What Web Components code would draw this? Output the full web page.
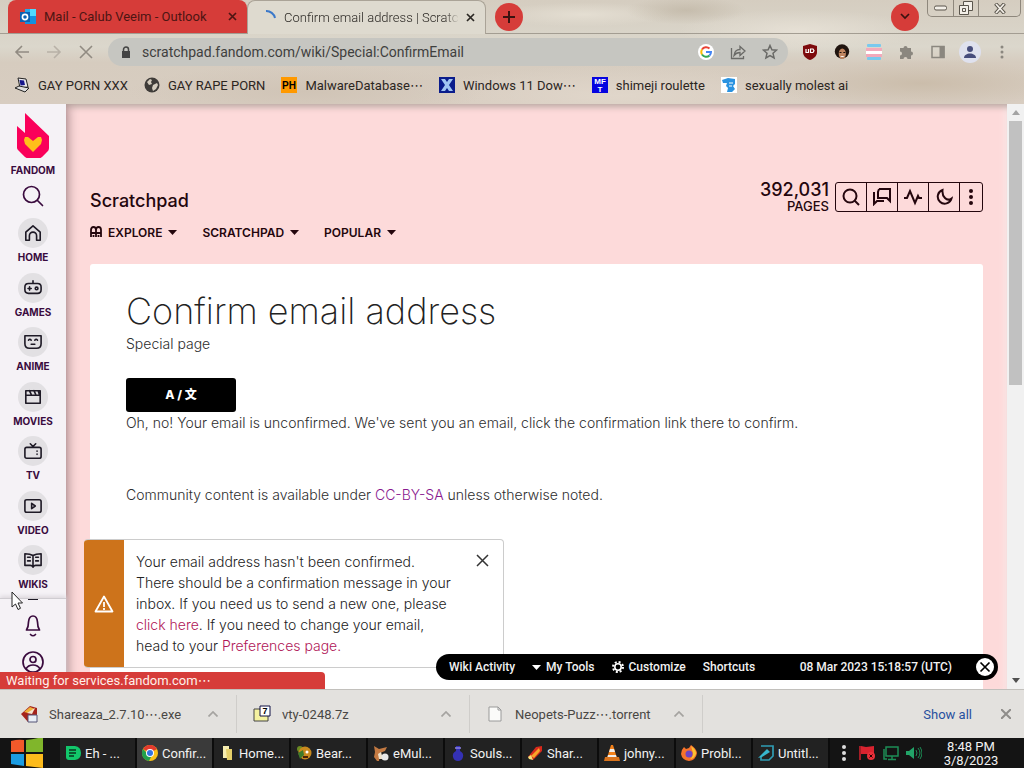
<!DOCTYPE html>
<html lang="en">
<head>
<meta charset="utf-8">
<meta name="viewport" content="width=device-width, initial-scale=1">
<title>Confirm email address | Scratchpad</title>
<style>
  html, body { height: 100%; margin: 0; }
  body {
    overflow: hidden;
    --ui: Roboto, "Liberation Sans", "Noto Sans CJK KR", sans-serif;
    --wiki: Inter, "Open Sans", "Noto Sans CJK SC", sans-serif;
    --red: #d63c39;
    --plum: #3a0b3e;
    font-family: var(--ui);
  }
</style>
</head>
<body>
<desktop-screen></desktop-screen>

<script>
// small helper so every element doesn't have to repeat the template dance
function define(name, html) {
  const template = document.createElement("template");
  template.innerHTML = `<style>
    *, *::before { box-sizing: border-box; }
    button { font: inherit; color: inherit; background: none; border: 0; padding: 0; margin: 0; }
    a { color: inherit; text-decoration: none; }
    svg { display: block; flex: none; }
    .e { font-family: "DejaVu Sans", sans-serif; line-height: 1; }
  </style>` + html;

  customElements.define(name, class extends HTMLElement {
    constructor() {
      super();
      this.attachShadow({ mode: "open" });
      this.shadowRoot.appendChild(template.content.cloneNode(true));
    }
  });
}

/* ---------- browser chrome ---------- */

define("browser-tab", `
<style>
  :host { display: flex; align-items: center; width: 239px; height: 33px; padding: 0 8px 0 12px; border-radius: 8px 8px 0 0; background: var(--red); color: #4d1513; font-size: 13px; box-sizing: border-box; }
  :host([active]) { height: 34px; background: #dedacf; color: #2b2824; font-weight: 300; border: 1px solid #aaa397; border-bottom: 0; }
  ::slotted(svg) { width: 16px; height: 16px; flex: none; margin-right: 8px; }
  .label { flex: 1; min-width: 0; overflow: hidden; white-space: nowrap; }
  :host([active]) .label { -webkit-mask-image: linear-gradient(90deg, #000 92%, transparent); mask-image: linear-gradient(90deg, #000 92%, transparent); }
  button { width: 14px; height: 16px; margin-left: 4px; display: grid; place-items: center; }
</style>
<slot name="icon"></slot>
<span class="label"><slot></slot></span>
<button aria-label="Close tab"><svg width="9" height="9" viewBox="0 0 9 9" stroke="currentColor" stroke-width="1.7"><path d="M1 1l7 7M8 1l-7 7"/></svg></button>
`);

define("tab-strip", `
<style>
  :host { display: flex; align-items: flex-end; height: 34px; padding-left: 8px; border-bottom: 1px solid #a39d92; box-sizing: border-box; }
  .round { width: 28px; height: 28px; border-radius: 50%; background: var(--red); display: grid; place-items: center; align-self: center; margin-left: 9px; color: #3a1210; flex: none; }
  .search { margin-left: auto; margin-right: 8px; }
  .win { display: flex; align-self: flex-start; height: 17px; margin-right: 3px; border: 1px solid #8e877c; border-top: 0; border-radius: 0 0 5px 5px; color: #5a554c; }
  .win button { display: grid; place-items: center; width: 25px; }
  .win button + button { border-left: 1px solid #8e877c; }
  .win button:last-child { width: 42px; }
  browser-tab[active] { margin-bottom: -1px; }
</style>
<browser-tab>
  <svg slot="icon" viewBox="0 0 16 16"><path d="M5 0h11v14H5z" fill="#28a8ea"/><path d="M10 0h6v7h-6z" fill="#50d9ff"/><path d="M5 7h11v8H5z" fill="#1490df"/><path d="M0 3h10v10H0z" fill="#0b62b4"/><circle cx="5" cy="8" r="2.6" fill="none" stroke="#fff" stroke-width="1.6"/></svg>
  Mail - Calub Veeim - Outlook
</browser-tab>
<browser-tab active>
  <svg slot="icon" viewBox="0 0 16 16"><path d="M6 1a9 9 0 0 1 9 7" fill="none" stroke="#3b78c9" stroke-width="2"/></svg>
  Confirm email address | Scratch
</browser-tab>
<button class="round" aria-label="New tab"><svg width="12" height="12" viewBox="0 0 12 12" stroke="currentColor" stroke-width="2"><path d="M6 0v12M0 6h12"/></svg></button>
<button class="round search" aria-label="Search tabs"><svg width="10" height="7" viewBox="0 0 10 7" fill="none" stroke="currentColor" stroke-width="1.7"><path d="M1 1l4 4 4-4"/></svg></button>
<div class="win">
  <button aria-label="Minimize"><svg width="13" height="6" viewBox="0 0 13 6"><rect x=".5" y="1" width="12" height="4" rx="1.5" fill="#f3efe8" stroke="currentColor"/></svg></button>
  <button aria-label="Restore"><svg width="14" height="14" viewBox="0 0 14 14" fill="#f3efe8" stroke="currentColor"><path d="M4.500.5h9v9h-9z"/><path d="M.5 4.500h9v9h-9zM3.500 7.500h3v3h-3z"/></svg></button>
  <button aria-label="Close"><svg width="12" height="11" viewBox="0 0 12 11"><path d="M1.500.5L10.500 10.500M10.500.5L1.500 10.500" stroke="currentColor" stroke-width="3.600"/><path d="M2 1l8 9M10 1L2 10" stroke="#f3efe8" stroke-width="1.800"/></svg></button>
</div>
`);

define("address-bar", `
<style>
  :host { display: flex; align-items: center; height: 36px; padding: 0 14px; color: #a7a197; }
  .nav { display: flex; gap: 16px; margin-right: 14px; }
  .nav button { width: 16px; height: 16px; }
  .box { flex: 1; display: flex; align-items: center; height: 28px; padding: 0 10px 0 13px; border-radius: 14px; background: #c6c6c1; color: #6a6a67; min-width: 0; }
  .box button { margin-left: 16px; }
  .url { flex: 1; min-width: 0; margin-left: 11px; font-size: 14px; }
  input { width: 100%; border: 0; padding: 0; background: none; font: inherit; color: #3f403e; outline: 0; }
  .g { width: 16px; height: 16px; border-radius: 50%; background: #fff; display: grid; place-items: center; }
  .ext { display: flex; align-items: center; gap: 16px; margin-left: 14px; color: #8b877f; }
  .me { width: 22px; height: 22px; border-radius: 50%; background: #dfe1ee; display: grid; place-items: center; margin: 0 -3px; }
</style>
<div class="nav">
  <button aria-label="Back"><svg width="16" height="16" viewBox="0 0 16 16" fill="none" stroke="#918b82" stroke-width="1.600"><path d="M15 8H2M8 2L2 8l6 6"/></svg></button>
  <button aria-label="Forward"><svg width="16" height="16" viewBox="0 0 16 16" fill="none" stroke="#b8b1a7" stroke-width="1.600"><path d="M1 8h13M8 2l6 6-6 6"/></svg></button>
  <button aria-label="Stop"><svg width="16" height="16" viewBox="0 0 16 16" fill="none" stroke="#918b82" stroke-width="1.600"><path d="M2 2l12 12M14 2L2 14"/></svg></button>
</div>
<div class="box">
  <svg width="10" height="13" viewBox="0 0 10 13"><path d="M1 5h8v7H1z" fill="#444"/><path d="M2.500 5V3.500a2.500 2.500 0 0 1 5 0V5" fill="none" stroke="#444" stroke-width="1.500"/></svg>
  <div class="url"><input aria-label="Address" value="scratchpad.fandom.com/wiki/Special:ConfirmEmail"></div>
  <button class="g" aria-label="Google"><svg width="12" height="12" viewBox="0 0 12 12" fill="none" stroke-width="2"><path d="M9.500 2.500A5 5 0 0 0 2 3.500" stroke="#e94335"/><path d="M2 3.500a5 5 0 0 0 0 5" stroke="#fbbc05"/><path d="M2 8.500a5 5 0 0 0 7.500 1" stroke="#34a853"/><path d="M6 6h5a5 5 0 0 1-1.500 3.500" stroke="#4285f4"/></svg></button>
  <button aria-label="Share"><svg width="16" height="16" viewBox="0 0 16 16" fill="none" stroke="currentColor" stroke-width="1.300"><path d="M1.500 4v10.500h12V12"/><path d="M4 11.500c.5-4 3-6 6-6V2.500l5 4.500-5 4.500v-3c-3 0-4.500 1-6 3z"/></svg></button>
  <button aria-label="Bookmark this page"><svg width="16" height="16" viewBox="0 0 16 16" fill="none" stroke="currentColor" stroke-width="1.500"><path d="M8 1.500l1.900 4.300 4.600.4-3.500 3.100 1.100 4.600L8 11.500l-4.100 2.400L5 9.300 1.500 6.200l4.600-.4z"/></svg></button>
</div>
<div class="ext">
  <svg width="16" height="16" viewBox="0 0 16 16"><path d="M8 0l7 2v6c0 4-3 6.500-7 8-4-1.500-7-4-7-8V2z" fill="#7d0a0c"/><path d="M4 5v3.500h2.500V5M8.500 5v3.500H11l1-1.800L11 5z" fill="none" stroke="#fff" stroke-width="1.200"/></svg>
  <svg width="16" height="16" viewBox="0 0 16 16"><circle cx="8" cy="7.500" r="7.200" fill="#20140f"/><ellipse cx="8.300" cy="9.800" rx="3.600" ry="5.200" fill="#c08560"/><path d="M6 12q2.300 2 4.500 0z" fill="#fff"/><path d="M5.500 8.500h2M9.300 8.500h2" stroke="#20140f"/></svg>
  <svg width="16" height="16" viewBox="0 0 16 16"><rect x="1" width="14" height="3" rx="1" fill="#79c9ee"/><rect y="4" width="16" height="3" fill="#f3a9ba"/><rect y="7" width="16" height="3" fill="#fff"/><rect y="10" width="16" height="3" fill="#f3a9ba"/><rect x="1" y="13" width="14" height="3" rx="1" fill="#79c9ee"/></svg>
  <svg width="16" height="16" viewBox="0 0 16 16" fill="#8b877f"><path d="M2 4h3.500a2 2 0 1 1 4 0H13v3.500a2 2 0 1 1 0 4V15H9.500a2 2 0 0 0-4 0H2v-3.500a2 2 0 0 0 0-4z"/></svg>
  <svg width="16" height="16" viewBox="0 0 16 16"><path d="M2 2.500h12v11H2z" fill="none" stroke="#8b877f" stroke-width="1.500"/><path d="M9.500 2h5v12h-5z" fill="#8b877f"/></svg>
  <button class="me" aria-label="Profile"><svg width="14" height="14" viewBox="0 0 14 14" fill="#474d7c"><circle cx="7" cy="4" r="3"/><path d="M1 13c0-6 12-6 12 0z"/></svg></button>
  <svg width="16" height="16" viewBox="0 0 16 16" fill="#8b877f"><circle cx="8" cy="3" r="1.500"/><circle cx="8" cy="8" r="1.500"/><circle cx="8" cy="13" r="1.500"/></svg>
</div>
`);

define("bookmark-link", `
<style>
  :host { display: block; }
  a { display: flex; align-items: center; gap: 8px; white-space: nowrap; }
  ::slotted(svg) { width: 16px; height: 16px; flex: none; }
</style>
<a href="#"><slot name="icon"></slot><span><slot></slot></span></a>
`);

define("bookmarks-bar", `
<style>
  :host { display: flex; align-items: center; gap: 16px; height: 34px; padding: 0 14px 4px; color: #2c261f; font-size: 13px; box-sizing: border-box; }
</style>
<bookmark-link><svg slot="icon" viewBox="0 0 16 16"><path d="M4 1l8 1 2 8-8 1z" fill="#e9e9ee" stroke="#222"/><path d="M5.500 3l4.500.5 1 4.500-4.500.5z" fill="#15158c"/><path d="M1 11l4-2 10 2-4 4z" fill="#ddd" stroke="#222"/></svg>GAY PORN XXX</bookmark-link>
<bookmark-link><svg slot="icon" viewBox="0 0 16 16"><circle cx="8" cy="8" r="7.500" fill="#3f3c39"/><path d="M3 5l3-3 2 1-1 2 1 2-3 1zM9 8l4-2 1 2-2 4-3 2-1-3z" fill="#d5cdbf"/></svg>GAY RAPE PORN</bookmark-link>
<bookmark-link><svg slot="icon" viewBox="0 0 16 16"><path d="M0 0h16v16H0z" fill="#f90"/><text x="8" y="12" text-anchor="middle" font-family="Liberation Sans" font-size="10" font-weight="700">PH</text></svg>MalwareDatabase<span class="e">⋯</span></bookmark-link>
<bookmark-link><svg slot="icon" viewBox="0 0 16 16"><path d="M0 0h16v16H0z" fill="#0a1c8c"/><path d="M2 2h4l2 3 2-3h4l-4 6 4 6h-4l-2-3-2 3H2l4-6z" fill="#9fc4f2"/></svg>Windows 11 Dow<span class="e">⋯</span></bookmark-link>
<bookmark-link><svg slot="icon" viewBox="0 0 16 16"><path d="M0 0h16v16H0z" fill="#0503e0"/><g fill="#fff" font-family="Liberation Sans" font-weight="700" font-size="8" text-anchor="middle"><text x="8" y="7">MF</text><text x="8" y="15">T</text></g></svg>shimeji roulette</bookmark-link>
<bookmark-link><svg slot="icon" viewBox="0 0 16 16"><path d="M0 0h16v16H0z" fill="#fff"/><path d="M1 3l6-2 7 1v5l-2 2 2 3-3 3H6l1-4-2-2 1-3H2z" fill="#2b93e0"/><path d="M8 6h4M8 9h3" stroke="#fff"/></svg>sexually molest ai</bookmark-link>
`);

/* ---------- wiki page ---------- */

define("rail-item", `
<style>
  :host { display: block; }
  a { display: flex; flex-direction: column; align-items: center; gap: 2px; color: var(--plum); font: 700 10px/14px var(--wiki); }
  .disc { width: 30px; height: 30px; border-radius: 50%; background: #e2e0e3; display: grid; place-items: center; }
  ::slotted(svg) { width: 18px; height: 18px; fill: none; stroke: #1e1a26; stroke-width: 1.800; stroke-linejoin: round; stroke-linecap: round; }
</style>
<a href="#"><span class="disc"><slot name="icon"></slot></span><slot></slot></a>
`);

define("global-rail", `
<style>
  :host { display: flex; flex-direction: column; width: 66px; flex: none; background: #f5f2f6; box-shadow: 0 0 12px #8a6a6f; position: relative; z-index: 1; color: var(--plum); box-sizing: border-box; clip-path: inset(0 -14px 0 0); }
  .logo { display: flex; flex-direction: column; align-items: center; padding-top: 9px; font: 700 10px/14px var(--wiki); gap: 4px; }
  .find { display: grid; place-items: center; height: 37px; }
  .hubs { flex: 1; display: flex; flex-direction: column; justify-content: space-between; min-height: 0; padding: 4px 0 7px; }
  .user { border-top: 1px solid #cfccd1; display: flex; flex-direction: column; align-items: center; gap: 13px; height: 91px; box-shadow: 0 -2px 4px #ddd8de; }
</style>
<a class="logo" href="#">
  <svg width="34" height="46" viewBox="0 0 34 46"><path d="M9 0l24 23v12c0 2-1 3-2 4l-5 5c-1 1-2 1-3 1H13c-2 0-3 0-4-1L2 37c-1-1-1-2-1-3V13l8 7z" fill="#fa005a"/><path d="M12 24l5 4 5-4h3l1 3-1 4-8 8-8-8-1-4 1-3z" fill="#ffbe1a"/></svg>
  FANDOM
</a>
<button class="find" aria-label="Search"><svg width="22" height="22" viewBox="0 0 22 22" fill="none" stroke="currentColor" stroke-width="1.700" stroke-linecap="round"><circle cx="9.500" cy="9.500" r="8"/><path d="M15.500 15.500l5 5"/></svg></button>
<nav class="hubs">
  <rail-item><svg slot="icon" viewBox="0 0 20 20"><path d="M2 9l8-7 8 7v9h-4v-5a4 4 0 0 0-8 0v5H2z"/></svg>HOME</rail-item>
  <rail-item><svg slot="icon" viewBox="0 0 20 20"><path d="M10 5V2M5 5h10q4 0 4 4v3q0 4-4 4H5q-4 0-4-4V9q0-4 4-4zM4.500 10.500h3.500M6.200 8.800v3.500"/><circle cx="14" cy="10.500" r="1.500"/></svg>GAMES</rail-item>
  <rail-item><svg slot="icon" viewBox="0 0 20 20"><path d="M1 3h18v9q0 5-5 5H6q-5 0-5-5zM5 8q1.500-2 3 0M12 8q1.500-2 3 0M8 12.500h4"/></svg>ANIME</rail-item>
  <rail-item><svg slot="icon" viewBox="0 0 20 20"><path d="M2 3h16v14H2zM2 8h16M6 3l2 4M11 3l2 4M16 4l1 3"/></svg>MOVIES</rail-item>
  <rail-item><svg slot="icon" viewBox="0 0 20 20"><path d="M3 6h14q2 0 2 2v8q0 2-2 2H3q-2 0-2-2V8q0-2 2-2zM7 2l3 3 3-3M14.500 10v.2M14.500 13.500v.2"/></svg>TV</rail-item>
  <rail-item><svg slot="icon" viewBox="0 0 20 20"><path d="M3 3h14q2 0 2 2v10q0 2-2 2H3q-2 0-2-2V5q0-2 2-2zM8.500 7v6l4-3z"/></svg>VIDEO</rail-item>
  <rail-item><svg slot="icon" viewBox="0 0 20 20"><path d="M10 5q-3-2-9-2v13h6q2 0 3 2 1-2 3-2h6V3q-6 0-9 2v11M4 7h3M4 11h3M13 7h3M13 11h3"/></svg>WIKIS</rail-item>
</nav>
<div class="user">
  <svg width="14" height="2" viewBox="0 0 14 2"><path d="M2 0h10" stroke="#1e1a26" stroke-width="2"/></svg>
  <button aria-label="Notifications"><svg width="22" height="24" viewBox="0 0 22 24" fill="none" stroke="currentColor" stroke-width="1.700" stroke-linecap="round" stroke-linejoin="round"><path d="M4.500 16q2-3 2-8 .5-6 4.500-6t4.500 6q0 5 2 8zM8.500 20.500q2.500 2.500 5 0"/></svg></button>
  <button aria-label="Account"><svg width="22" height="22" viewBox="0 0 22 22" fill="none" stroke="currentColor" stroke-width="1.700"><circle cx="11" cy="11" r="10"/><circle cx="11" cy="8.500" r="3"/><path d="M4 18q2-4 7-4t7 4"/></svg></button>
</div>
`);

define("community-header", `
<style>
  :host { display: block; padding-top: 76px; height: 160px; box-sizing: border-box; color: #24060d; font-family: var(--wiki); }
  .top { display: flex; justify-content: space-between; align-items: center; height: 34px; }
  .name { align-self: flex-end; font: 500 18px/26px var(--wiki); }
  .right { display: flex; align-items: center; gap: 6px; }
  .count { display: flex; flex-direction: column; align-items: flex-end; }
  .count b { font: 500 18px/18px var(--wiki); }
  .count span { font: 500 13px/15px var(--wiki); }
  .tools { display: flex; border: 1px solid #24060d; border-radius: 3px; height: 30px; }
  .tools button { width: 31px; display: grid; place-items: center; }
  .tools button:first-child { width: 30px; }
  .tools button:last-child { width: 23px; }
  .tools button + button { border-left: 1px solid #24060d; }
  .tools svg { fill: none; stroke: currentColor; stroke-width: 2; }
  nav { display: flex; gap: 25px; height: 36px; align-items: center; font-weight: 600; font-size: 12px; }
  nav button { display: flex; align-items: center; gap: 6px; }
</style>
<div class="top">
  <a class="name" href="#">Scratchpad</a>
  <div class="right">
    <div class="count"><b>392,031</b><span>PAGES</span></div>
    <div class="tools">
      <button aria-label="Search"><svg width="18" height="18" viewBox="0 0 18 18"><circle cx="8" cy="8" r="6.500"/><path d="M12.500 12.500l4.500 4.500"/></svg></button>
      <button aria-label="Discuss"><svg width="18" height="18" viewBox="0 0 18 18"><path d="M6 1h11v12l-3-3H5V4l1-3M1 4v12l3-3h7"/></svg></button>
      <button aria-label="Recent changes"><svg width="18" height="18" viewBox="0 0 18 18"><path d="M0 10h3l3-7 5 12 3-7 1 2h3"/></svg></button>
      <button aria-label="Dark theme"><svg width="18" height="18" viewBox="0 0 18 18"><path d="M7.500 2A7 7 0 1 0 16.500 10.500Q13 13 10 10T7.500 2z"/></svg></button>
      <button aria-label="More"><svg width="6" height="18" viewBox="0 0 6 18" style="fill: currentColor; stroke: none"><circle cx="3" cy="3" r="2"/><circle cx="3" cy="9" r="2"/><circle cx="3" cy="15" r="2"/></svg></button>
    </div>
  </div>
</div>
<nav>
  <button><svg width="12" height="12" viewBox="0 0 12 12" fill="none" stroke="currentColor" stroke-width="1.800"><path d="M1 11V4q0-3 2.500-3T6 4v7V4q0-3 2.500-3T11 4v7M1 7h10M3.500 9v2M8.500 9v2"/></svg>EXPLORE<svg width="9" height="5" viewBox="0 0 9 5"><path d="M0 0h9L4.500 5z" fill="currentColor"/></svg></button>
  <button>SCRATCHPAD<svg width="9" height="5" viewBox="0 0 9 5"><path d="M0 0h9L4.500 5z" fill="currentColor"/></svg></button>
  <button>POPULAR<svg width="9" height="5" viewBox="0 0 9 5"><path d="M0 0h9L4.500 5z" fill="currentColor"/></svg></button>
</nav>
`);

define("wiki-article", `
<style>
  :host { display: block; flex: 1; padding: 27px 36px 0; background: #fff; color: #2e2e2e; border-radius: 3px 3px 0 0; font: 300 14px/22px var(--wiki); }
  h1 { margin: 0; font: 200 36px/40px var(--wiki); color: #222; }
  p { margin: 0; }
  .sub { margin: 2px 0 23px; }
  .lang { display: block; width: 110px; height: 34px; border-radius: 3px; background: #000; color: #fff; font: 800 12px/34px var(--wiki); }
  .licence { margin-top: 50px; }
  .licence a { color: #8a1a8f; }
</style>
<h1>Confirm email address</h1>
<p class="sub">Special page</p>
<button class="lang">A / 文</button>
<p>Oh, no! Your email is unconfirmed. We've sent you an email, click the confirmation link there to confirm.</p>
<p class="licence">Community content is available under <a href="#">CC-BY-SA</a> unless otherwise noted.</p>
`);

define("notice-banner", `
<style>
  :host { display: flex; width: 420px; background: #fff; border: 1px solid #ccc; border-left: 0; border-radius: 4px; box-sizing: border-box; overflow: hidden; color: #222; font: 300 14px/21px var(--wiki); }
  .mark { width: 40px; background: #cd731b; display: grid; place-items: center; }
  .text { flex: 1; padding: 11px 12px; }
  button { align-self: flex-start; margin: 14px 14px 0 0; }
</style>
<div class="mark"><svg width="20" height="18" viewBox="0 0 20 18" fill="none" stroke="#fff" stroke-width="1.800" stroke-linejoin="round"><path d="M10 1.500L18.500 16.500h-17zM10 7v5M10 13v2"/></svg></div>
<div class="text"><slot></slot></div>
<button aria-label="Dismiss"><svg width="13" height="13" viewBox="0 0 13 13" stroke="#333" stroke-width="1.500"><path d="M1 1l11 11M12 1L1 12"/></svg></button>
`);

define("wiki-toolbar", `
<style>
  :host { display: flex; align-items: center; width: 562px; height: 26px; padding: 0 4px 0 13px; border-radius: 13px; background: #000; color: #f2f2f2; box-sizing: border-box; font: 500 12px/26px var(--ui); white-space: nowrap; gap: 17px; }
  a, button { display: flex; align-items: center; gap: 5px; }
  time { margin-left: auto; }
  .x { margin-left: 7px; }
</style>
<a href="#">Wiki Activity</a>
<button><svg width="9" height="5" viewBox="0 0 9 5"><path d="M0 0h9L4.500 5z" fill="#fff"/></svg>My Tools</button>
<a href="#"><svg width="12" height="12" viewBox="0 0 12 12" fill="none" stroke="#fff"><circle cx="6" cy="6" r="3.200" stroke-width="1.600"/><circle cx="6" cy="6" r="5" stroke-width="2" stroke-dasharray="2 1.930"/></svg>Customize</a>
<a href="#">Shortcuts</a>
<time>08 Mar 2023 15:18:57 (UTC)</time>
<button class="x" aria-label="Close toolbar"><svg width="18" height="18" viewBox="0 0 18 18"><circle cx="9" cy="9" r="9" fill="#fff"/><path d="M4.500 4.500l9 9M13.500 4.500l-9 9" stroke="#000" stroke-width="1.700"/></svg></button>
`);

define("page-scrollbar", `
<style>
  :host { display: flex; flex-direction: column; align-items: center; width: 17px; flex: none; background: #f1f1f1; }
  svg { margin: 6px 0; }
  .thumb { width: 13px; height: 264px; background: #c1c1c1; }
  svg:last-child { margin-top: auto; }
</style>
<svg width="8" height="5" viewBox="0 0 8 5"><path d="M0 5h8L4 0z" fill="#a3a3a3"/></svg>
<div class="thumb"></div>
<svg width="8" height="5" viewBox="0 0 8 5"><path d="M0 0h8L4 5z" fill="#505050"/></svg>
`);

define("wiki-page", `
<style>
  :host { display: flex; flex: 1; min-height: 0; position: relative; overflow: hidden; background: #fddada; }
  main { flex: 1; min-width: 0; display: flex; flex-direction: column; padding: 0 24px; box-shadow: inset 0 7px 6px -4px #b9a9a3, inset -6px 0 6px -4px #fbe9e9; }
  /* things floating over the page */
  notice-banner { position: absolute; z-index: 2; left: 84px; bottom: 21px; }
  notice-banner a { color: #b01657; }
  wiki-toolbar { position: absolute; z-index: 3; right: 26px; bottom: 9px; }
  .status { position: absolute; z-index: 4; left: 0; bottom: 0; width: 325px; height: 17px; padding-left: 6px; background: var(--red); color: #fff0ea; border-radius: 0 4px 0 0; font: 13px/18px var(--ui); box-sizing: border-box; overflow: hidden; }
  .cursor { position: absolute; z-index: 5; left: 11px; top: 487px; }
</style>
<global-rail></global-rail>
<main>
  <community-header></community-header>
  <wiki-article></wiki-article>
</main>
<page-scrollbar></page-scrollbar>
<notice-banner>Your email address hasn't been confirmed.<br>There should be a confirmation message in your<br>inbox. If you need us to send a new one, please<br><a href="#">click here</a>. If you need to change your email,<br>head to your <a href="#">Preferences page.</a></notice-banner>
<wiki-toolbar></wiki-toolbar>
<div class="status">Waiting for services.fandom.com<span class="e">⋯</span></div>
<svg class="cursor" width="13" height="20" viewBox="0 0 13 20"><path d="M1 1v15l3.500-3 2.500 5.500 2.500-1.200L7 12h4.500z" fill="#fff" stroke="#222"/></svg>
`);

/* ---------- downloads + taskbar ---------- */

define("download-item", `
<style>
  :host { display: flex; align-items: center; width: 233px; height: 38px; padding: 0 18px 0 16px; border-right: 1px solid #cfcdca; box-sizing: border-box; }
  ::slotted(svg) { width: 18px; height: 18px; margin-right: 11px; flex: none; }
  .file { flex: 1; white-space: nowrap; }
</style>
<slot name="icon"></slot><span class="file"><slot></slot></span>
<button aria-label="Options"><svg width="10" height="6" viewBox="0 0 10 6" fill="none" stroke="#a5a3a0" stroke-width="1.700"><path d="M0.500 5.500L5 1l4.500 4.500"/></svg></button>
`);

define("download-shelf", `
<style>
  :host { display: flex; align-items: center; height: 49px; padding: 0 13px 0 4px; background: #e3e1de; border-top: 1px solid #c2c0bc; color: #494744; font-size: 13px; box-sizing: border-box; }
  .all { margin-left: auto; margin-right: 29px; color: #27509f; }
</style>
<download-item><svg slot="icon" viewBox="0 0 18 18"><path d="M1 9l9-8 7 2v8L8 17z" fill="#a5231c"/><path d="M4 7l6-5 5 2-7 4z" fill="#f0b13c"/><path d="M7 8l8-5-3 6z" fill="#f5e3cf"/><path d="M8 10h9v7H8z" fill="#e9eef6" stroke="#557"/></svg>Shareaza_2.7.10<span class="e">⋯</span>.exe</download-item>
<download-item><svg slot="icon" viewBox="0 0 18 18"><path d="M1 4h6l1 2h7v10H1z" fill="#f4f1a0" stroke="#444"/><path d="M7 1h10v10H7z" fill="#fff" stroke="#101045"/><text x="12" y="9" text-anchor="middle" font-family="Liberation Sans" font-size="9" font-weight="700">7</text></svg>vty-0248.7z</download-item>
<download-item><svg slot="icon" viewBox="0 0 18 18"><path d="M3 2h9l3 3v11H3z" fill="#fbfbf9" stroke="#999"/><path d="M12 2v3h3" fill="none" stroke="#999"/></svg>Neopets-Puzz<span class="e">⋯</span>.torrent</download-item>
<a class="all" href="#">Show all</a>
<button aria-label="Close shelf"><svg width="10" height="10" viewBox="0 0 10 10" stroke="#8f8d8a" stroke-width="2"><path d="M0 0l10 10M10 0L0 10"/></svg></button>
`);

define("task-button", `
<style>
  :host { display: block; flex: 0 1 77px; min-width: 0; border-right: 2px solid #0c0c0c; background: #222; box-sizing: border-box; }
  :host([active]) { background: #3a3a3a; }
  button { display: flex; align-items: center; gap: 4px; width: 100%; height: 100%; padding-left: 5px; white-space: nowrap; overflow: hidden; }
  ::slotted(svg) { width: 16px; height: 16px; flex: none; }
</style>
<button><slot name="icon"></slot><span><slot></slot></span></button>
`);

define("task-bar", `
<style>
  :host { display: flex; height: 30px; background: #141414; color: #f2f2f2; font-size: 13px; }
  .start { width: 60px; display: flex; padding-left: 10px; }
  .tasks { flex: 1; min-width: 0; display: flex; }
  .tray { display: flex; align-items: center; gap: 7px; padding: 0 11px 0 9px; }
  time { width: 84px; text-align: center; line-height: 14px; padding-top: 1px; }
</style>
<button class="start" aria-label="Start"><svg width="34" height="30" viewBox="0 0 34 30"><path d="M1 3q7-2 13-1v12H1z" fill="#f1592a"/><path d="M16 2q8-1 17-3v15H16z" fill="#80b62b"/><path d="M1 16h13v12L1 26z" fill="#1b9ce2"/><path d="M16 16h17v14l-17-2z" fill="#fdbb1c"/></svg></button>
<div class="tasks">
  <task-button><svg slot="icon" viewBox="0 0 16 16"><path d="M1 1h9q6 1 6 7t-6 7H4q-3 0-3-3z" fill="#12c76b"/><path d="M4 5h7M4 8h7M4 11h5" stroke="#08351f" stroke-width="1.500"/></svg>Eh - ...</task-button>
  <task-button active><svg slot="icon" viewBox="0 0 16 16"><circle cx="8" cy="8" r="8" fill="#fbc116"/><path d="M8 8L1 4a8 8 0 0 1 14 0z" fill="#e33b2e"/><path d="M1 4a8 8 0 0 0 6 12l3-6-4-1z" fill="#22a04c"/><circle cx="8" cy="8" r="4" fill="#fff"/><circle cx="8" cy="8" r="3" fill="#3274e0"/></svg>Confir...</task-button>
  <task-button><svg slot="icon" viewBox="0 0 16 16"><path d="M4 1h6v12H4z" fill="#f6edb0"/><path d="M7 4h6v11H8z" fill="#e5cf6a"/></svg>Home...</task-button>
  <task-button><svg slot="icon" viewBox="0 0 16 16"><circle cx="4" cy="4" r="3" fill="#6a8a22"/><circle cx="9" cy="8" r="6.500" fill="#c98a1e"/><path d="M2 8l5-3 1 5-4 4z" fill="#3d7a2a"/><circle cx="11" cy="7" r="1.500" fill="#fff"/><path d="M7 12h5" stroke="#4a2208" stroke-width="2"/></svg>Bear...</task-button>
  <task-button><svg slot="icon" viewBox="0 0 16 16"><path d="M1 1l5 3 8-2-2 4-5 2-1 8H4L1 12l1-5z" fill="#c47a42"/><path d="M5 9l3-2 2 7H6z" fill="#efe0c8"/><circle cx="12" cy="12" r="3.500" fill="#e8e8e8"/></svg>eMul...</task-button>
  <task-button><svg slot="icon" viewBox="0 0 16 16"><path d="M6 1h4v5q4 2 3 6-1 4-5 4t-5-4q-1-4 3-6z" fill="#3431b5"/><path d="M5 3h6" stroke="#8b82e0" stroke-width="1.500"/></svg>Souls...</task-button>
  <task-button><svg slot="icon" viewBox="0 0 16 16"><path d="M1 12l8-10 6-1v5L6 15z" fill="#d8291c"/><path d="M4 11l8-8 1 3-6 7z" fill="#f7a428"/><path d="M1 12l3-2 2 5-4-1z" fill="#f6e07a"/></svg>Shar...</task-button>
  <task-button><svg slot="icon" viewBox="0 0 16 16"><path d="M7 0h2l4 13H3z" fill="#f0801a"/><path d="M6 4h4l1 3H5zM4 10h8l.5 2h-9z" fill="#eee"/><path d="M1 12h14l1 4H0z" fill="#d9731c"/></svg>johny...</task-button>
  <task-button><svg slot="icon" viewBox="0 0 16 16"><path d="M3 2l2 2 3-1 2-3q5 3 6 8-1 7-8 8-7-1-8-7 0-4 3-7z" fill="#f7732b"/><path d="M10 1q5 3 5 8-2 5-6 5 3-2 3-6z" fill="#fdc231"/><circle cx="8" cy="9" r="3.500" fill="#6f45c4"/></svg>Probl...</task-button>
  <task-button><svg slot="icon" viewBox="0 0 16 16"><path d="M3 1h12v10l-4 4H3v-4" fill="none" stroke="#2f9db5" stroke-width="1.700"/><path d="M0 13l9-9 3 3-8 5z" fill="#37b6cd"/></svg>Untitl...</task-button>
</div>
<div class="tray">
  <svg width="6" height="18" viewBox="0 0 6 18" fill="#ddd"><circle cx="3" cy="3" r="2"/><circle cx="3" cy="9" r="2"/><circle cx="3" cy="15" r="2"/></svg>
  <svg width="18" height="16" viewBox="0 0 18 16" style="margin-left: 4px"><path d="M2 1v14" stroke="#c8202b" stroke-width="1.600"/><path d="M3 1l5 1 8-1v8H3z" fill="#d9232f"/><circle cx="13" cy="11" r="4" fill="#e8303a"/><path d="M11.500 9.500l3 3M14.500 9.500l-3 3" stroke="#200"/></svg>
  <svg width="16" height="16" viewBox="0 0 16 16" fill="none" stroke="#1c8d55" stroke-width="1.500"><path d="M3 2h12v9H3zM9 11v3M5 14.500h8M1 4v10h3"/></svg>
  <svg width="16" height="14" viewBox="0 0 16 14"><path d="M0 5h3l5-4v12L3 9H0z" fill="#22a468"/><path d="M10 4q2 3 0 6M12 2q4 5 0 10M14 1q4 6 0 12" fill="none" stroke="#1c8d55"/></svg>
  <time>8:48 PM<br>3/8/2023</time>
</div>
`);

define("desktop-screen", `
<style>
  :host { display: flex; flex-direction: column; height: 100vh; }
  /* marble theme behind the tabs and toolbars */
  header {
    flex: none;
    background:
      radial-gradient(ellipse 60px 14px at 67% 10%, #b9ae9c90, transparent),
      radial-gradient(ellipse 120px 22px at 78% 30%, #e6e0d5, transparent),
      radial-gradient(ellipse 90px 12px at 57% 14%, #e4ded2, transparent),
      radial-gradient(ellipse 160px 24px at 90% 80%, #cbbdab, transparent),
      radial-gradient(ellipse 180px 26px at 30% 88%, #d0c4b6, transparent),
      radial-gradient(ellipse 200px 30px at 60% 92%, #e0d6ca, transparent),
      linear-gradient(#d5cdc0, #dbd7cc 45%, #d6ccbf 60%, #d8cdc1);
  }
</style>
<header>
  <tab-strip></tab-strip>
  <address-bar></address-bar>
  <bookmarks-bar></bookmarks-bar>
</header>
<wiki-page></wiki-page>
<download-shelf></download-shelf>
<task-bar></task-bar>
`);
</script>
</body>
</html>
